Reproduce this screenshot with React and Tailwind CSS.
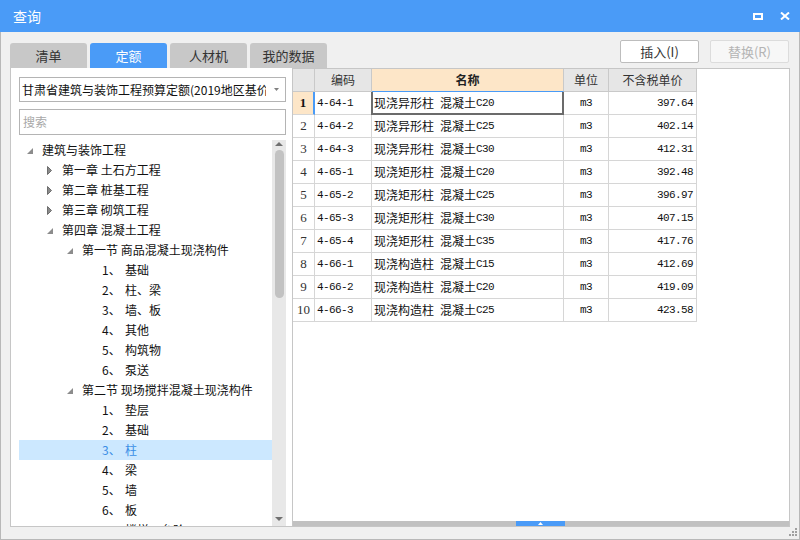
import React from 'react';

const tree = [
  { l: 0, t: '建筑与装饰工程', s: 'open' },
  { l: 1, t: '第一章 土石方工程', s: 'closed' },
  { l: 1, t: '第二章 桩基工程', s: 'closed' },
  { l: 1, t: '第三章 砌筑工程', s: 'closed' },
  { l: 1, t: '第四章 混凝土工程', s: 'open' },
  { l: 2, t: '第一节 商品混凝土现浇构件', s: 'open' },
  { l: 3, n: '1、', t: '基础' },
  { l: 3, n: '2、', t: '柱、梁' },
  { l: 3, n: '3、', t: '墙、板' },
  { l: 3, n: '4、', t: '其他' },
  { l: 3, n: '5、', t: '构筑物' },
  { l: 3, n: '6、', t: '泵送' },
  { l: 2, t: '第二节 现场搅拌混凝土现浇构件', s: 'open' },
  { l: 3, n: '1、', t: '垫层' },
  { l: 3, n: '2、', t: '基础' },
  { l: 3, n: '3、', t: '柱', sel: true },
  { l: 3, n: '4、', t: '梁' },
  { l: 3, n: '5、', t: '墙' },
  { l: 3, n: '6、', t: '板' },
  { l: 3, n: '7、', t: '楼梯、台阶' },
];

const indent = ['pl-0', 'pl-[20px]', 'pl-[40px]', 'pl-[60px]'];

const rows = [
  ['4-64-1', '现浇异形柱', 'C20', '397.64'],
  ['4-64-2', '现浇异形柱', 'C25', '402.14'],
  ['4-64-3', '现浇异形柱', 'C30', '412.31'],
  ['4-65-1', '现浇矩形柱', 'C20', '392.48'],
  ['4-65-2', '现浇矩形柱', 'C25', '396.97'],
  ['4-65-3', '现浇矩形柱', 'C30', '407.15'],
  ['4-65-4', '现浇矩形柱', 'C35', '417.76'],
  ['4-66-1', '现浇构造柱', 'C15', '412.69'],
  ['4-66-2', '现浇构造柱', 'C20', '419.09'],
  ['4-66-3', '现浇构造柱', 'C25', '423.58'],
];

const mono = "font-['Liberation_Mono',monospace] text-[11px] tracking-[-0.6px]";

function TreeIcon({ s }) {
  if (s === 'open')
    return (
      <svg width="6" height="6" className="mt-[2px]">
        <polygon points="6,0 6,6 0,6" fill="#8c8c8c" />
      </svg>
    );
  if (s === 'closed')
    return (
      <svg width="5" height="9">
        <polygon points="0.5,0.5 4.5,4.5 0.5,8.5" fill="#8a8a8a" stroke="#6e6e6e" strokeWidth="1" />
      </svg>
    );
  return null;
}

function Tab({ label, active }) {
  return (
    <div
      className={`flex h-[25px] w-[77px] items-center justify-center rounded-t-[3px] text-[13px] ${
        active ? 'bg-[#4a9bf7] text-white' : 'bg-[#c8c8c8] text-[#333333]'
      }`}
    >
      {label}
    </div>
  );
}

export default function App() {
  return (
    <div className="relative flex h-[540px] w-[800px] flex-col bg-[#f0f0f0] font-['Noto_Sans_CJK_SC',sans-serif] text-[12px] text-[#111111]">
      {/* Title bar */}
      <div className="flex h-[32px] shrink-0 items-center justify-between bg-[#4a9bf7] pl-[13px] pr-[10px] text-white">
        <span className="text-[14px]">查询</span>
        <div className="flex items-center gap-[17px]">
          <svg width="10" height="7">
            <rect x="1" y="1" width="8" height="5" fill="none" stroke="white" strokeWidth="2" />
          </svg>
          <svg width="10" height="8">
            <path d="M1 0.5 L9 7.5 M9 0.5 L1 7.5" stroke="white" strokeWidth="2" />
          </svg>
        </div>
      </div>

      {/* Body */}
      <div className="flex flex-1 flex-col border-x border-b border-[#b8b8b8] px-[9px] pt-[8px]">
        {/* tabs + buttons */}
        <div className="flex h-[28px] justify-between">
          <div className="flex items-end gap-[3px]">
            <Tab label="清单" />
            <Tab label="定额" active />
            <Tab label="人材机" />
            <Tab label="我的数据" />
          </div>
          <div className="mr-[1px] flex items-start gap-[11px]">
            <div className="flex h-[23px] w-[79px] items-center justify-center rounded-[2px] border border-[#bdbdbd] bg-white text-[13px] text-[#333333]">
              插入(I)
            </div>
            <div className="flex h-[23px] w-[79px] items-center justify-center rounded-[2px] border border-[#dcdcdc] bg-[#f7f7f7] text-[13px] text-[#b4b4b4]">
              替换(R)
            </div>
          </div>
        </div>

        {/* main */}
        <div className="flex h-[459px] bg-white">
          {/* left pane */}
          <div className="flex w-[282px] shrink-0 flex-col border-b border-l border-[#c6c6c6] pl-[8px] pr-[6px]">
            <div className="mt-[9px] flex h-[25px] items-center justify-between overflow-hidden border border-[#b4b4b4] bg-white pl-[2px] pr-[6px]">
              <span className="overflow-hidden whitespace-nowrap">甘肃省建筑与装饰工程预算定额(2019地区基价</span>
              <svg width="5" height="3" className="ml-[8px] shrink-0">
                <polygon points="0,0 5,0 2.5,3" fill="#808080" />
              </svg>
            </div>
            <div className="mt-[7px] flex h-[26px] items-center border border-[#b4b4b4] pl-[3px] text-[#a8a8a8]">
              搜索
            </div>
            <div className="mt-[5px] flex min-h-0 flex-1">
              <div className="min-w-0 flex-1 overflow-hidden">
                {tree.map((it, i) => (
                  <div
                    key={i}
                    className={`flex h-[20px] items-center whitespace-nowrap ${indent[it.l]} ${
                      it.sel ? 'bg-[#cce8ff] text-[#3a8ee6]' : ''
                    }`}
                  >
                    <span className="flex w-[23px] shrink-0 items-center pl-[8px]">
                      <TreeIcon s={it.s} />
                    </span>
                    {it.n && <span className="w-[23px] shrink-0">{it.n}</span>}
                    <span>{it.t}</span>
                  </div>
                ))}
              </div>
              {/* scrollbar */}
              <div className="flex w-[14px] shrink-0 flex-col items-center bg-[#e8e8e8]">
                <svg width="8" height="4" className="mt-[2px]">
                  <polygon points="0,4 4,0 8,4" fill="#707070" />
                </svg>
                <div className="mt-[4px] h-[148px] w-[9px] rounded-full bg-[#c2c2c2]" />
                <div className="flex-1" />
                <svg width="8" height="4" className="mb-[5px]">
                  <polygon points="0,0 8,0 4,4" fill="#707070" />
                </svg>
              </div>
            </div>
          </div>

          {/* grid */}
          <div className="flex min-w-0 flex-1 flex-col border border-[#c6c6c6]">
            <div className="flex-1">
              <div className="flex">
                <div className="h-[23px] w-[22px] border-b border-r border-[#c9c9c9] bg-[#e6e6e6]" />
                <div className="flex h-[23px] w-[57px] items-center justify-center border-b border-r border-[#c9c9c9] bg-[#e6e6e6] text-[#333333]">
                  编码
                </div>
                <div className="flex h-[23px] w-[192px] items-center justify-center border-b border-r border-b-[#4a9bf7] border-r-[#c9c9c9] bg-[#fde6c8] font-bold text-[#222222]">
                  名称
                </div>
                <div className="flex h-[23px] w-[45px] items-center justify-center border-b border-r border-[#c9c9c9] bg-[#e6e6e6] text-[#333333]">
                  单位
                </div>
                <div className="flex h-[23px] w-[88px] items-center justify-center border-b border-r border-[#c9c9c9] bg-[#e6e6e6] text-[#333333]">
                  不含税单价
                </div>
              </div>
              {rows.map((r, i) => (
                <div key={i} className="flex">
                  <div
                    className={`flex h-[23px] w-[22px] items-center justify-center border-b border-[#d6d6d6] font-['Liberation_Serif',serif] text-[13px] ${
                      i === 0
                        ? 'border-r-2 border-r-[#4a9bf7] bg-[#fde6c8] font-bold'
                        : 'border-r bg-white text-[#333333]'
                    }`}
                  >
                    {i + 1}
                  </div>
                  <div className={`flex h-[23px] w-[57px] items-center border-b border-r border-[#d6d6d6] pl-[2px] ${mono}`}>
                    {r[0]}
                  </div>
                  <div className="relative flex h-[23px] w-[192px] items-center whitespace-nowrap border-b border-r border-[#d6d6d6] pl-[2px]">
                    <span>{r[1]}</span>
                    <span className="inline-block w-[6px]" />
                    <span>混凝土</span>
                    <span className={mono}>{r[2]}</span>
                    {i === 0 && (
                      <div className="absolute bottom-[-1px] left-[-1px] right-[-1px] top-0 border-x-2 border-b-2 border-[#6b6b6b]" />
                    )}
                  </div>
                  <div className={`flex h-[23px] w-[45px] items-center justify-center border-b border-r border-[#d6d6d6] ${mono}`}>
                    m3
                  </div>
                  <div className={`flex h-[23px] w-[88px] items-center justify-end border-b border-r border-[#d6d6d6] pr-[3px] ${mono}`}>
                    {r[3]}
                  </div>
                </div>
              ))}
            </div>
            <div className="flex h-[5px] shrink-0 bg-[#c1c1c1]">
              <div className="w-[223px]" />
              <div className="flex w-[49px] items-center justify-center bg-[#4a9bf7]">
                <svg width="5" height="3">
                  <polygon points="0,3 2.5,0 5,3" fill="white" />
                </svg>
              </div>
            </div>
          </div>
        </div>
      </div>

      {/* resize grip */}
      <svg width="8" height="8" className="absolute bottom-[4px] right-[3px]">
        <rect x="6" y="0" width="2" height="2" fill="#a0a0a0" />
        <rect x="3" y="3" width="2" height="2" fill="#a0a0a0" />
        <rect x="6" y="3" width="2" height="2" fill="#a0a0a0" />
        <rect x="0" y="6" width="2" height="2" fill="#a0a0a0" />
        <rect x="3" y="6" width="2" height="2" fill="#a0a0a0" />
        <rect x="6" y="6" width="2" height="2" fill="#a0a0a0" />
      </svg>
    </div>
  );
}
